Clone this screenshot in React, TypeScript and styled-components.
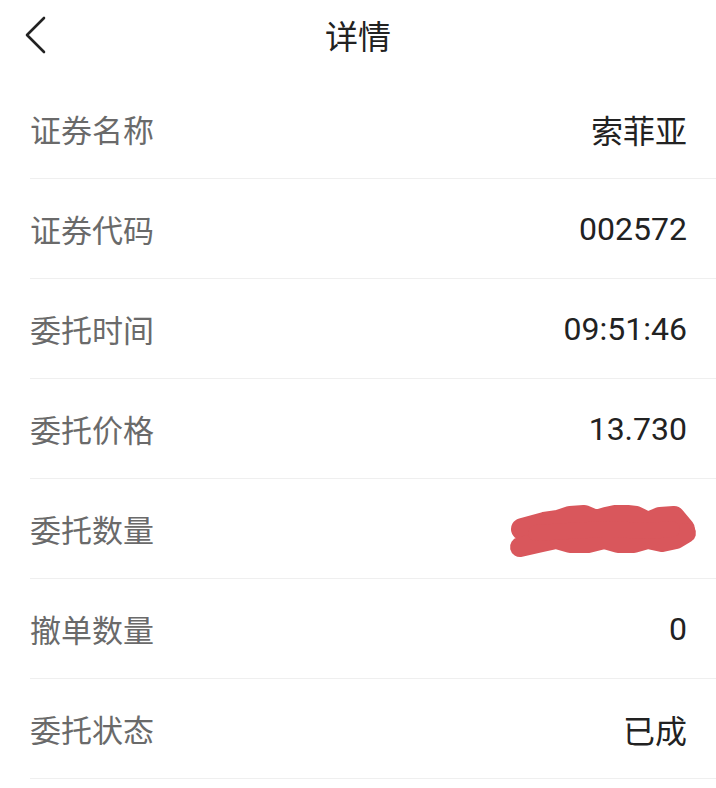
import React from 'react';
import styled, { createGlobalStyle } from 'styled-components';

const GlobalStyle = createGlobalStyle`
    html, body {
        margin: 0;
        padding: 0;
        background: #ffffff;
    }
    body {
        font-family: Roboto, "Noto Sans CJK SC", "Noto Sans", sans-serif;
    }
`

const Page = styled.div`
    width: 716px;
    background: #ffffff;
`

const Header = styled.header`
    height: 79px;
    box-sizing: border-box;
    padding-bottom: 9px;
    display: grid;
    grid-template-columns: 90px 1fr 90px;
    align-items: center;
`

const BackButton = styled.button`
    border: none;
    background: none;
    padding: 0 0 0 24px;
    height: 40px;
    display: flex;
    align-items: center;
    cursor: pointer;
`

const Title = styled.h1`
    margin: 0;
    text-align: center;
    font-size: 33px;
    font-weight: 400;
    color: #222222;
`

const List = styled.div`
    display: flex;
    flex-direction: column;
`

const Row = styled.div`
    height: 100px;
    box-sizing: border-box;
    margin-left: 30px;
    padding-right: 29px;
    border-bottom: 1px solid #efefef;
    display: flex;
    align-items: center;
    justify-content: space-between;
`

const Label = styled.span`
    font-size: 31px;
    color: #6a6a6a;
`

const Value = styled.span`
    font-size: 32px;
    color: #222222;
`

const Scribble = styled.svg`
    display: block;
    margin-right: -13px;
    margin-top: 8px;
`

const items = [
    { label: '证券名称', value: '索菲亚' },
    { label: '证券代码', value: '002572' },
    { label: '委托时间', value: '09:51:46' },
    { label: '委托价格', value: '13.730' },
    { label: '委托数量', value: null },
    { label: '撤单数量', value: '0' },
    { label: '委托状态', value: '已成' },
]

function Hidden() {
    return (
        <Scribble width="192" height="56" viewBox="0 0 192 56">
            <g fill="none" stroke="#d9575c" strokeLinecap="round" strokeLinejoin="round">
                <path strokeWidth="22" d="M14 24 L36 18 L50 16 L62 12 L76 11 L88 16 L98 13 L112 10 L128 12 L140 18 L152 13 L166 12 L176 24" />
                <path strokeWidth="20" d="M12 42 L34 37 L48 34 L62 38 L80 38 L96 34 L110 38 L126 38 L140 34 L154 37 L168 34 L178 28" />
                <path strokeWidth="16" d="M28 28 L60 26 L100 24 L140 26 L164 24" />
            </g>
        </Scribble>
    )
}

export default function App() {
    return (
        <Page>
            <GlobalStyle />
            <Header>
                <BackButton aria-label="返回">
                    <svg width="24" height="38" viewBox="0 0 24 38">
                        <path d="M20 2 L3 19 L20 36" fill="none" stroke="#222" strokeWidth="2.6" strokeLinecap="round" strokeLinejoin="round" />
                    </svg>
                </BackButton>
                <Title>详情</Title>
                <div />
            </Header>
            <List>
                {items.map(item => (
                    <Row key={item.label}>
                        <Label>{item.label}</Label>
                        {item.value === null ? <Hidden /> : <Value>{item.value}</Value>}
                    </Row>
                ))}
            </List>
        </Page>
    );
}
